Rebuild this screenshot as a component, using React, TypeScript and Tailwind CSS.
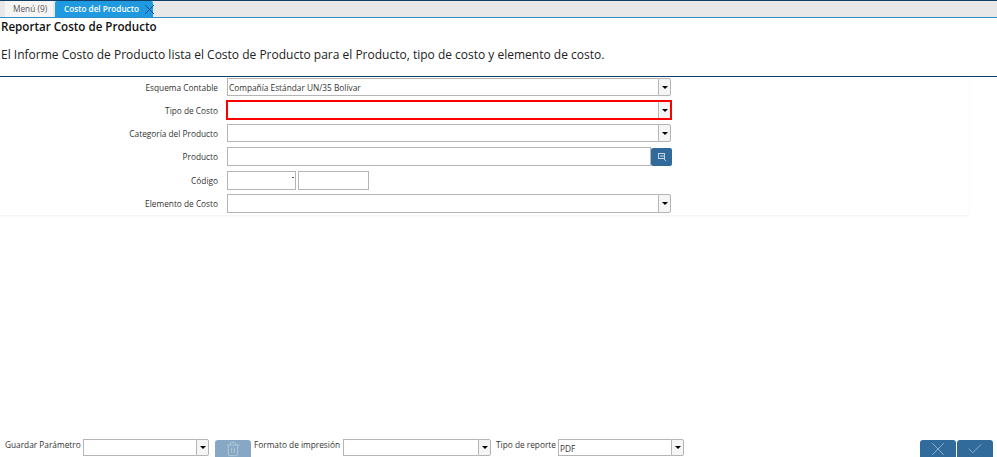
import { Check, Trash2, X } from "lucide-react";
import React from "react";

function Arrow() {
  return <div className="w-0 h-0 border-x-[3px] border-x-transparent border-t-[3px] border-t-black" />;
}

function Combo({ value, className }: { value?: string; className: string }) {
  return (
    <div className={`flex ${className}`}>
      <div className="flex-1 min-w-0 border border-r-0 border-[#b5b5b5] bg-white pl-[1px] text-[8.3px] leading-[17px] text-[#333]">
        {value}
      </div>
      <div className="w-[13px] flex items-center justify-center bg-[#f5f5f5] border border-[#b5b5b5] rounded-r-[2px]">
        <Arrow />
      </div>
    </div>
  );
}

function Row({ label, children, className }: { label: string; children: React.ReactNode; className: string }) {
  return (
    <div className={`flex items-center ${className}`}>
      <div className="w-[218px] pt-[2px] text-right text-[8.3px] text-[#333]">{label}</div>
      <div className="ml-[9px] w-[445px]">{children}</div>
    </div>
  );
}

export default function App() {
  return (
    <div className="w-[997px] h-[457px] overflow-hidden bg-white flex flex-col font-['Open_Sans',sans-serif] text-[#222]">
      <div className="h-[18px] border-t border-t-[#123f66] border-b border-b-[#2d8fc7] bg-[#e8e8e8] flex pl-[5px] gap-[2px] shrink-0">
        <div className="w-[48px] pl-[8px] bg-[#f5f5f5] text-[8.3px] leading-[16px] text-[#555]">Menú (9)</div>
        <div className="w-[98px] relative bg-[#1f9ae0] rounded-t-[2px] text-[8.2px] font-semibold leading-[16px] text-white pl-[9px]">
          Costo del Producto
          <X className="absolute left-[86px] top-[0px] w-[17px] h-[17px] text-[#1b4a78]" strokeWidth={1.3} />
        </div>
      </div>
      <div className="pl-[1px] h-[59px] border-b-[1px] border-[#123f66] shrink-0">
        <div className="text-[11.6px] font-semibold leading-[18px] text-[#111]">Reportar Costo de Producto</div>
        <div className="text-[12px] leading-[16px] mt-[11px]">
          El Informe Costo de Producto lista el Costo de Producto para el Producto, tipo de costo y elemento de costo.
        </div>
      </div>
      <div className="w-[969px] h-[138px] pt-[1px] shadow-[0_1px_2px_rgba(0,0,0,0.06)] shrink-0">
        <Row label="Esquema Contable" className="h-[18px]">
          <Combo value="Compañía Estándar UN/35 Bolívar" className="w-[444px] h-[18px]" />
        </Row>
        <Row label="Tipo de Costo" className="h-[20px] mt-[4px]">
          <div className="h-[20px] w-[446px] -ml-[1px] border-2 border-[#f00] flex">
            <div className="flex-1 bg-white" />
            <div className="w-[12px] flex items-center justify-center bg-[#f5f5f5] border-l border-[#b5b5b5]">
              <Arrow />
            </div>
          </div>
        </Row>
        <Row label="Categoría del Producto" className="h-[18px] mt-[4px]">
          <Combo className="w-[444px] h-[18px]" />
        </Row>
        <Row label="Producto" className="h-[19px] mt-[5px]">
          <div className="flex h-[19px]">
            <div className="w-[424px] border border-[#b5b5b5] bg-white" />
            <div className="w-[21px] h-[18px] mt-[1px] bg-[#316b9c] rounded-[2px] flex items-center justify-center">
              <svg width="8" height="8" viewBox="0 0 8 8" fill="none" stroke="#c3d4e4" strokeWidth="1">
                <rect x="0.5" y="0.5" width="6" height="5" />
                <path d="M3 2v2M5 2v2M6 6l2 2" />
              </svg>
            </div>
          </div>
        </Row>
        <Row label="Código" className="h-[19px] mt-[5px]">
          <div className="flex gap-[2px] relative">
            <div className="w-[69px] h-[19px] border border-[#b5b5b5] bg-white" />
            <div className="absolute left-[65px] top-[6px] w-[2px] h-[1px] bg-[#555]" />
            <div className="w-[71px] h-[19px] border border-[#b5b5b5] bg-white" />
          </div>
        </Row>
        <Row label="Elemento de Costo" className="h-[19px] mt-[4px]">
          <Combo className="w-[444px] h-[19px]" />
        </Row>
      </div>
      <div className="flex-1 flex items-end pl-[5px] text-[8.3px] text-[#333]">
        <div className="flex items-start h-[18px] w-full whitespace-nowrap">
          <div className="-mt-[1px] w-[78px] leading-[14px]">Guardar Parámetro</div>
          <Combo className="w-[126px] h-[17px]" />
          <div className="ml-[6px] w-[36px] h-[17px] mt-[1px] bg-[#87a8c4] rounded-t-[3px] flex items-center justify-center">
            <Trash2 className="w-[16px] h-[16px] shrink-0 text-[#b3c8d9]" strokeWidth={1.4} />
          </div>
          <div className="ml-[3px] -mt-[1px] w-[89px] leading-[14px]">Formato de impresión</div>
          <Combo className="w-[148px] h-[17px]" />
          <div className="ml-[5px] -mt-[1px] w-[62px] leading-[14px]">Tipo de reporte</div>
          <Combo value="PDF" className="w-[126px] h-[17px]" />
          <div className="ml-auto mr-[4px] flex gap-[1px] mt-[1px]">
            <div className="w-[36px] h-[17px] bg-[#316b9c] rounded-t-[3px] flex items-center justify-center">
              <X className="w-[22px] h-[22px] shrink-0 text-[#a9c4da]" strokeWidth={0.8} />
            </div>
            <div className="w-[36px] h-[17px] bg-[#316b9c] rounded-t-[3px] flex items-center justify-center">
              <Check className="w-[18px] h-[18px] shrink-0 text-[#a9c4da]" strokeWidth={1} />
            </div>
          </div>
        </div>
      </div>
    </div>
  );
}
